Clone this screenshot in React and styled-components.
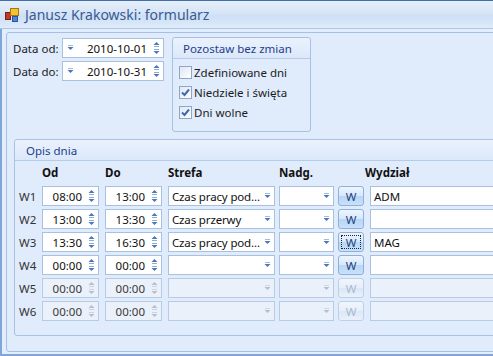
import styled, { createGlobalStyle, css } from "styled-components";

const GlobalStyle = createGlobalStyle`
  html, body {
    margin: 0;
    padding: 0;
    background: #e0ebfb;
  }
  body {
    font-family: "Noto Sans", "DejaVu Sans", sans-serif;
    font-size: 11.5px;
    color: #1c1c1c;
  }
`;

const Window = styled.div`
  width: 493px;
  height: 356px;
  overflow: hidden;
  display: flex;
  flex-direction: column;
  background: #e0ebfb;
  border-top: 1px solid #3f6eab;
  box-sizing: border-box;
`;

const TitleBar = styled.div`
  height: 27px;
  flex: none;
  display: flex;
  align-items: center;
  gap: 6px;
  padding-left: 5px;
  background: linear-gradient(#e6eff9 0%, #d6e5f7 45%, #cde0f5 55%, #dfebfa 100%);
  border-bottom: 1px solid #a8c6ea;
  color: #3a5a94;
  font-size: 14px;
`;

const Frame = styled.div`
  flex: 1;
  display: flex;
  border-left: 2px solid #7ea6d8;
  border-bottom: 2px solid #7ea6d8;
  padding: 3px 0 2px 4px;
  background: #e3edfb;
`;

const Panel = styled.div`
  width: 540px;
  flex: none;
  border: 1px solid #a5c0e4;
  border-radius: 3px;
  background: #e0ebfb;
  padding: 5px 0 0 6px;
  display: flex;
  flex-direction: column;
`;

const TopSection = styled.div`
  display: flex;
  align-items: flex-start;
  gap: 8px;
`;

const DateBlock = styled.div`
  display: flex;
  flex-direction: column;
  gap: 3px;
`;

const DateRow = styled.div`
  display: flex;
  align-items: center;
`;

const Label = styled.span`
  width: ${(p) => p.$w || 49}px;
  flex: none;
  color: #1c1c1c;
`;

const Field = styled.div`
  box-sizing: border-box;
  width: ${(p) => p.$w}px;
  height: 20px;
  flex: none;
  display: flex;
  align-items: center;
  border: 1px solid ${(p) => (p.$disabled ? "#b8cbe5" : "#a9c1e1")};
  background: ${(p) => (p.$disabled ? "#ebf1fa" : "#ffffff")};
  color: ${(p) => (p.$disabled ? "#3a3a3a" : "#111")};
  white-space: nowrap;
  overflow: hidden;
`;

const FieldText = styled.span`
  flex: 1;
  min-width: 0;
  padding: 0 ${(p) => (p.$right ? "2px" : "0")} 0 3px;
  text-align: ${(p) => (p.$right ? "right" : "left")};
  letter-spacing: ${(p) => (p.$tight ? "-0.15px" : "normal")};
  overflow: hidden;
`;

const ArrowBox = styled.span`
  width: ${(p) => p.$w || 14}px;
  flex: none;
  display: flex;
  align-items: center;
  justify-content: center;
`;

const Group = styled.div`
  box-sizing: border-box;
  border: 1px solid #a7c2e6;
  border-radius: 3px;
  display: flex;
  flex-direction: column;
  ${(p) =>
    p.$box &&
    css`
      width: 139px;
      height: 95px;
      margin-top: -1px;
    `}
`;

const GroupHeader = styled.div`
  height: 20px;
  flex: none;
  display: flex;
  align-items: center;
  padding-left: ${(p) => p.$pad || 10}px;
  color: #1f3f8c;
  background: linear-gradient(#ebf2fd, #dbe8fa);
  border-bottom: 1px solid #b3ccec;
  border-radius: 3px 3px 0 0;
`;

const CheckList = styled.div`
  display: flex;
  flex-direction: column;
  gap: 5px;
  padding: 6px 0 0 6px;
`;

const CheckRow = styled.label`
  display: flex;
  align-items: center;
  gap: 2px;
  height: 15px;
`;

const Box = styled.span`
  box-sizing: border-box;
  width: 13px;
  height: 13px;
  border: 1px solid #8fa6c6;
  background: linear-gradient(135deg, #dfe7f2, #ffffff);
  display: flex;
  align-items: center;
  justify-content: center;
`;

const DayGroup = styled(Group)`
  margin: 7px 0 0 1px;
  height: 197px;
`;

const Table = styled.div`
  display: grid;
  grid-template-columns: 23px 63px 63px 111px 59px 32px 140px;
  grid-auto-rows: 20px;
  row-gap: 3px;
  padding: 2px 0 0 4px;
  align-items: center;
`;

const HeadCell = styled.div`
  font-weight: bold;
  color: #111;
  height: 28px;
  margin-bottom: 2px;
  display: flex;
  align-items: center;
  margin-left: ${(p) => p.$shift || 0}px;
`;

const RowLabel = styled.div`
  color: #333;
`;

const WButton = styled.div`
  box-sizing: border-box;
  width: 26px;
  height: 20px;
  border: 1px solid ${(p) => (p.$disabled ? "#bfd0e6" : "#8db1dc")};
  border-radius: 3px;
  display: flex;
  align-items: center;
  justify-content: center;
  color: ${(p) => (p.$disabled ? "#a9b9cf" : "#22407c")};
  background: ${(p) =>
    p.$disabled
      ? "linear-gradient(#f1f6fc 0%, #e6eef9 50%, #dbe7f6 51%, #e9f1fb 100%)"
      : "linear-gradient(#eef5fe 0%, #d8e8fb 48%, #b8d6f6 52%, #c9e1fa 100%)"};
  position: relative;
  ${(p) =>
    p.$focus &&
    css`
      &::after {
        content: "";
        position: absolute;
        inset: 2px;
        border: 1px dotted #222;
      }
    `}
`;

const AppIcon = () => (
  <svg width="14" height="14" viewBox="0 0 14 14">
    <rect x="0.5" y="4.5" width="5" height="7" fill="#c0392b" stroke="#7a1e14" />
    <rect x="5.5" y="0.5" width="8" height="7" fill="#f4c430" stroke="#a8770c" />
    <rect x="7.5" y="8.5" width="5" height="5" fill="#4d86d6" stroke="#2a5599" />
  </svg>
);

const Spin = ({ disabled }) => {
  const c = disabled ? "#b4bfcd" : "#4a77b6";
  return (
    <svg width="7" height="14" viewBox="0 0 7 14">
      <path d="M3.5 1 L6.5 4 L0.5 4 Z" fill={c} />
      <rect x="1" y="5" width="5" height="1" fill={c} opacity="0.6" />
      <rect x="1" y="8" width="5" height="1" fill={c} opacity="0.6" />
      <path d="M0.5 10 L6.5 10 L3.5 13 Z" fill={c} />
    </svg>
  );
};

const Drop = ({ disabled }) => {
  const c = disabled ? "#b4bfcd" : "#4a77b6";
  return (
    <svg width="7" height="6" viewBox="0 0 7 6">
      <rect x="1" y="0" width="5" height="1" fill={c} opacity="0.5" />
      <path d="M0.5 2 L6.5 2 L3.5 5 Z" fill={c} />
    </svg>
  );
};

const Check = () => (
  <svg width="9" height="9" viewBox="0 0 9 9">
    <path d="M1 4.5 L3.5 7 L8 1.5" fill="none" stroke="#3d6bb0" strokeWidth="2" />
  </svg>
);

const DateField = ({ value }) => (
  <Field $w={102}>
    <ArrowBox $w={14}>
      <Drop />
    </ArrowBox>
    <FieldText $right>{value}</FieldText>
    <ArrowBox $w={14}>
      <Spin />
    </ArrowBox>
  </Field>
);

const TimeField = ({ value, disabled }) => (
  <Field $w={57} $disabled={disabled}>
    <FieldText $right>{value}</FieldText>
    <ArrowBox $w={14}>
      <Spin disabled={disabled} />
    </ArrowBox>
  </Field>
);

const Combo = ({ value, w, disabled }) => (
  <Field $w={w} $disabled={disabled}>
    <FieldText $tight>{value}</FieldText>
    <ArrowBox $w={13}>
      <Drop disabled={disabled} />
    </ArrowBox>
  </Field>
);

const rows = [
  { id: "W1", od: "08:00", do: "13:00", strefa: "Czas pracy pod...", wydz: "ADM" },
  { id: "W2", od: "13:00", do: "13:30", strefa: "Czas przerwy", wydz: "" },
  { id: "W3", od: "13:30", do: "16:30", strefa: "Czas pracy pod...", wydz: "MAG", focus: true },
  { id: "W4", od: "00:00", do: "00:00", strefa: "", wydz: "" },
  { id: "W5", od: "00:00", do: "00:00", strefa: "", wydz: "", disabled: true },
  { id: "W6", od: "00:00", do: "00:00", strefa: "", wydz: "", disabled: true },
];

const checks = [
  { label: "Zdefiniowane dni", on: false },
  { label: "Niedziele i święta", on: true },
  { label: "Dni wolne", on: true },
];

export default function App() {
  return (
    <>
      <GlobalStyle />
      <Window>
        <TitleBar>
          <AppIcon />
          <span>Janusz Krakowski: formularz</span>
        </TitleBar>
        <Frame>
          <Panel>
            <TopSection>
              <DateBlock>
                <DateRow>
                  <Label>Data od:</Label>
                  <DateField value="2010-10-01" />
                </DateRow>
                <DateRow>
                  <Label>Data do:</Label>
                  <DateField value="2010-10-31" />
                </DateRow>
              </DateBlock>
              <Group $box>
                <GroupHeader>Pozostaw bez zmian</GroupHeader>
                <CheckList>
                  {checks.map((c) => (
                    <CheckRow key={c.label}>
                      <Box>{c.on && <Check />}</Box>
                      <span>{c.label}</span>
                    </CheckRow>
                  ))}
                </CheckList>
              </Group>
            </TopSection>
            <DayGroup>
              <GroupHeader $pad={11}>Opis dnia</GroupHeader>
              <Table>
                <HeadCell />
                <HeadCell>Od</HeadCell>
                <HeadCell>Do</HeadCell>
                <HeadCell>Strefa</HeadCell>
                <HeadCell>Nadg.</HeadCell>
                <HeadCell />
                <HeadCell $shift={-5}>Wydział</HeadCell>
                {rows.map((r) => [
                  <RowLabel key={r.id + "l"}>{r.id}</RowLabel>,
                  <TimeField key={r.id + "o"} value={r.od} disabled={r.disabled} />,
                  <TimeField key={r.id + "d"} value={r.do} disabled={r.disabled} />,
                  <Combo key={r.id + "s"} w={107} value={r.strefa} disabled={r.disabled} />,
                  <Combo key={r.id + "n"} w={55} value="" disabled={r.disabled} />,
                  <WButton key={r.id + "w"} $disabled={r.disabled} $focus={r.focus}>
                    W
                  </WButton>,
                  <Field key={r.id + "y"} $w={140} $disabled={r.disabled}>
                    <FieldText>{r.wydz}</FieldText>
                  </Field>,
                ])}
              </Table>
            </DayGroup>
          </Panel>
        </Frame>
      </Window>
    </>
  );
}
